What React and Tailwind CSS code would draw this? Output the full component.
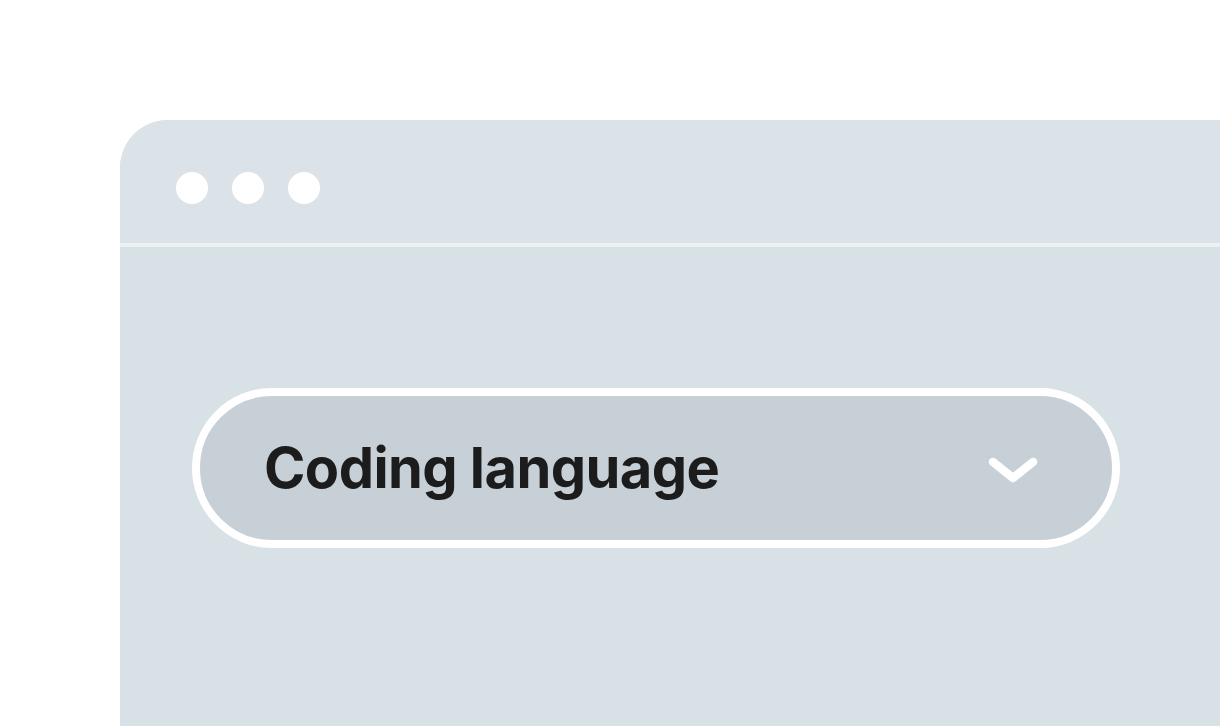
export default function App() {
    return (
        <div className="h-[726px] w-[1220px] overflow-hidden bg-white pl-[120px] pt-[120px]">
            <div className="h-[700px] w-[1143px] overflow-hidden rounded-t-[48px] bg-[#d7e1e6]">
                {/* Title bar */}
                <div className="flex h-[123px] items-center gap-6 bg-[#dbe3e8] pl-14 pt-[13px]">
                    <span className="h-8 w-8 rounded-full bg-white" />
                    <span className="h-8 w-8 rounded-full bg-white" />
                    <span className="h-8 w-8 rounded-full bg-white" />
                </div>
                <div className="h-1 bg-[#eef1f3]" />

                {/* Body */}
                <div className="pl-[72px] pt-[141px]">
                    <div className="flex h-[160px] w-[928px] items-center justify-between rounded-full border-8 border-white bg-[#c7d0d6] pl-16 pr-[74px]">
                        <span
                            className="text-[56px] font-bold leading-none tracking-[-0.01em] text-[#1c1c1c]"
                            style={{ fontFamily: 'Inter, "Liberation Sans", sans-serif' }}
                        >
                            Coding language
                        </span>
                        <svg width="50" height="26" viewBox="0 0 50 26" fill="none" className="mt-1">
                            <path d="M5 5 L25 21 L45 5" stroke="white" strokeWidth="8.5" strokeLinecap="round" strokeLinejoin="round" />
                        </svg>
                    </div>
                </div>
            </div>
        </div>
    );
}
